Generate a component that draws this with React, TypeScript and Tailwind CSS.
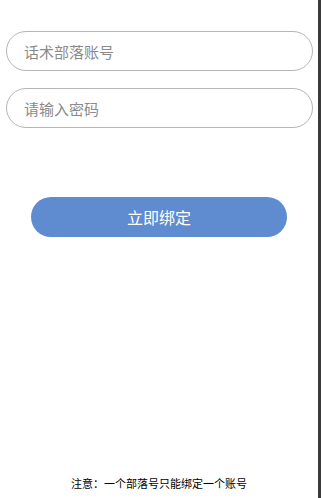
export default function App() {
  return (
    <div
      className="flex h-[498px] w-[321px] bg-white"
      style={{ fontFamily: '"Noto Sans CJK SC", "Liberation Sans", sans-serif' }}
    >
      <div className="flex w-[318px] flex-col">
        <div className="pt-[31px]">
          <input
            type="text"
            placeholder="话术部落账号"
            className="ml-[6px] block h-[40px] w-[307px] rounded-full border border-[#b5b5b5] px-[17px] text-[15px] text-[#333] placeholder:text-[#8a8a8a] focus:outline-none"
          />
          <input
            type="password"
            placeholder="请输入密码"
            className="ml-[6px] mt-[17px] block h-[40px] w-[307px] rounded-full border border-[#b5b5b5] px-[17px] text-[15px] text-[#333] placeholder:text-[#8a8a8a] focus:outline-none"
          />
        </div>
        <button className="mx-auto mt-[69px] h-[40px] w-[256px] rounded-full bg-[#5f8cd0] text-[16px] text-white">
          立即绑定
        </button>
        <p className="mt-auto pb-[7px] text-center text-[11px] text-black">
          注意：一个部落号只能绑定一个账号
        </p>
      </div>
      <div className="w-[3px] bg-[#3a3a3a]" />
    </div>
  );
}
